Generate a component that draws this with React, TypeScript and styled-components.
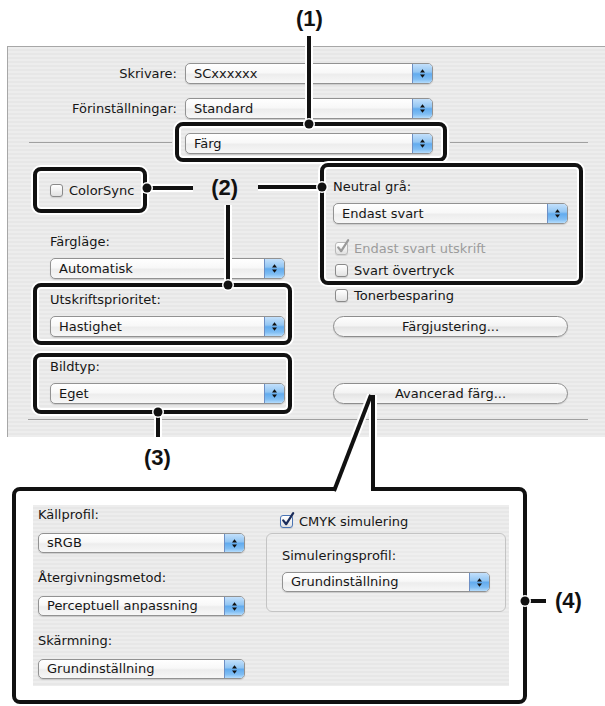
import React from 'react';
import styled, { createGlobalStyle } from 'styled-components';

const GlobalStyle = createGlobalStyle`
  html, body {
    margin: 0;
    padding: 0;
    background: #ffffff;
  }
  body {
    font-family: 'DejaVu Sans', 'Liberation Sans', sans-serif;
    font-size: 13px;
    color: #161616;
  }
`;

const stripes =
  'repeating-linear-gradient(180deg, #ededed 0px, #ededed 2px, #e7e7e7 2px, #e7e7e7 4px)';

const Page = styled.div`
  position: relative;
  width: 605px;
  height: 706px;
  overflow: hidden;
  background: #ffffff;
`;

const Header = styled.div`
  height: 46px;
  padding-top: 6px;
  box-sizing: border-box;
`;

const Marker = styled.div<{ $left: number; $top?: number }>`
  width: max-content;
  flex-shrink: 0;
  margin-left: ${(p) => p.$left}px;
  margin-top: ${(p) => p.$top ?? 0}px;
  font-family: 'Liberation Sans', Arial, sans-serif;
  font-weight: 700;
  font-size: 22px;
  line-height: 26px;
  color: #111;
`;

const Panel = styled.div`
  margin-left: 7px;
  height: 391px;
  box-sizing: border-box;
  padding-top: 16px;
  border-top: 1px solid #a7a7a7;
  border-left: 1px solid #a7a7a7;
  background: ${stripes};
`;

const TopForm = styled.div`
  display: grid;
  grid-template-columns: 169px 248px;
  column-gap: 8px;
  row-gap: 14px;
  align-items: center;
`;

const FormLabel = styled.div`
  text-align: right;
  line-height: 21px;
  white-space: nowrap;
`;

const PaneRow = styled.div`
  display: flex;
  align-items: center;
  gap: 3px;
  margin: 3px 17px 0 21px;
`;

const Rule = styled.div<{ $w?: number }>`
  height: 1px;
  background: #a0a0a0;
  ${(p) => (p.$w ? `width: ${p.$w}px; flex-shrink: 0;` : 'flex: 1;')}
`;

const Callout = styled.div<{ $pad: string; $mt?: number; $bg?: string }>`
  box-sizing: border-box;
  width: max-content;
  flex-shrink: 0;
  margin-top: ${(p) => p.$mt ?? 0}px;
  padding: ${(p) => p.$pad};
  border: 4px solid #111;
  border-radius: 8px;
  background: ${(p) => p.$bg ?? 'transparent'};
  box-shadow: 0 0 0 2px #fff, inset 0 0 0 2px #fff;
`;

const Columns = styled.div`
  display: grid;
  grid-template-columns: 259px 263px;
  column-gap: 28px;
  align-items: start;
  margin: 1px 0 0 25px;
`;

const Column = styled.div<{ $top?: number }>`
  display: flex;
  flex-direction: column;
  align-items: flex-start;
  padding-top: ${(p) => p.$top ?? 0}px;
`;

const ColorSyncRow = styled.div`
  display: flex;
  align-items: flex-start;
`;

const Field = styled.div<{ $gap?: number; $mt?: number; $ml?: number }>`
  display: flex;
  flex-direction: column;
  align-items: flex-start;
  gap: ${(p) => p.$gap ?? 8}px;
  margin-top: ${(p) => p.$mt ?? 0}px;
  margin-left: ${(p) => p.$ml ?? 0}px;
`;

const FieldLabel = styled.div`
  line-height: 16px;
  white-space: nowrap;
`;

const PopupBox = styled.div<{ $w: number; $h: number }>`
  display: flex;
  width: ${(p) => p.$w}px;
  height: ${(p) => p.$h}px;
  box-sizing: border-box;
  border: 1px solid #929292;
  border-radius: 5px;
  overflow: hidden;
  background: linear-gradient(180deg, #ffffff 0%, #f8f8f8 45%, #ededed 55%, #f7f7f7 100%);
  box-shadow: 0 1px 1px rgba(0, 0, 0, 0.14);
`;

const PopupValue = styled.div<{ $h: number }>`
  flex: 1;
  padding-left: 8px;
  line-height: ${(p) => p.$h - 2}px;
  white-space: nowrap;
  overflow: hidden;
`;

const PopupArrows = styled.div`
  width: 19px;
  display: flex;
  align-items: center;
  justify-content: center;
  border-left: 1px solid #6d8fc4;
  background: linear-gradient(
    180deg,
    #c3e0fb 0%,
    #93c6f3 42%,
    #62abee 52%,
    #7fbdf3 80%,
    #b5dcfc 100%
  );
`;

type PopupProps = { value: string; width: number; height?: number };

const Popup = ({ value, width, height = 21 }: PopupProps) => (
  <PopupBox $w={width} $h={height}>
    <PopupValue $h={height}>{value}</PopupValue>
    <PopupArrows>
      <svg width="7" height="11" viewBox="0 0 7 11">
        <path d="M3.5 1.2 L6 4.5 H1 Z M1 6.5 H6 L3.5 9.8 Z" fill="#111" />
      </svg>
    </PopupArrows>
  </PopupBox>
);

const CheckRow = styled.div<{ $muted?: boolean; $mt?: number; $ml?: number }>`
  display: flex;
  align-items: center;
  gap: 6px;
  height: 16px;
  margin-top: ${(p) => p.$mt ?? 0}px;
  margin-left: ${(p) => p.$ml ?? 0}px;
  color: ${(p) => (p.$muted ? '#9c9c9c' : '#161616')};
  white-space: nowrap;
`;

type Tone = 'plain' | 'muted' | 'blue';

const boxBorder: Record<Tone, string> = {
  plain: '#8a8a8a',
  muted: '#b8b8b8',
  blue: '#4a74b4',
};

const Box = styled.span<{ $tone: Tone }>`
  position: relative;
  width: 13px;
  height: 13px;
  box-sizing: border-box;
  border: 1px solid ${(p) => boxBorder[p.$tone]};
  border-radius: 3px;
  background: linear-gradient(180deg, #ffffff 0%, #f1f1f1 50%, #e1e1e1 100%);
  box-shadow: 0 1px 1px rgba(0, 0, 0, 0.1);

  svg {
    position: absolute;
    left: 0;
    top: -4px;
    overflow: visible;
  }
`;

type CheckProps = {
  label: string;
  checked?: boolean;
  tone?: Tone;
  mt?: number;
  ml?: number;
};

const Check = ({ label, checked, tone = 'plain', mt, ml }: CheckProps) => (
  <CheckRow $muted={tone === 'muted'} $mt={mt} $ml={ml}>
    <Box $tone={tone}>
      {checked && (
        <svg width="14" height="15" viewBox="0 0 14 15">
          <path
            d="M2.2 8.4 L5.2 12.2 L12.2 1.2"
            fill="none"
            stroke={tone === 'muted' ? '#9a9a9a' : '#1b2c5a'}
            strokeWidth="2.2"
            strokeLinecap="round"
            strokeLinejoin="round"
          />
        </svg>
      )}
    </Box>
    {label}
  </CheckRow>
);

const PushButton = styled.div<{ $mt: number }>`
  width: 235px;
  height: 21px;
  box-sizing: border-box;
  margin: ${(p) => p.$mt}px 0 0 13px;
  border: 1px solid #8d8d8d;
  border-radius: 11px;
  background: linear-gradient(180deg, #fefefe 0%, #f3f3f3 48%, #e4e4e4 52%, #f6f6f6 100%);
  box-shadow: 0 1px 1px rgba(0, 0, 0, 0.12);
  text-align: center;
  line-height: 19px;
`;

const Divider = styled.div`
  height: 1px;
  margin: 5px 17px 0 20px;
  background: #a0a0a0;
`;

const AdvancedRow = styled.div`
  display: flex;
  align-items: flex-start;
  margin-top: 16px;
  padding-left: 12px;
`;

const AdvancedPane = styled.div`
  width: 476px;
  height: 181px;
  box-sizing: border-box;
  padding: 2px 0 0 5px;
  background: ${stripes};
  display: grid;
  grid-template-columns: 207px 240px;
  column-gap: 21px;
  align-items: start;
`;

const Group = styled.div`
  margin-top: 4px;
  padding: 14px 15px 19px;
  border: 1px solid #c4c4c4;
  border-radius: 6px;
  background: rgba(255, 255, 255, 0.15);
`;

const Annotations = styled.svg`
  position: absolute;
  left: 0;
  top: 0;
  width: 605px;
  height: 706px;
  pointer-events: none;
`;

// leader lines of the callouts: white halo first, black stroke on top
const halos = [
  'M309 36 V124',
  'M147 188 H193',
  'M258 187 H322',
  'M228 205 V285',
  'M158 412 V437',
  'M336 485 L371 395',
  'M373 395 V485',
  'M525 601 H546',
];

const strokes = [
  'M309 36 V124',
  'M147 188 H193',
  'M258 187 H322',
  'M228 205 V285',
  'M158 412 V437',
  'M334 491 L371 395',
  'M373 395 V491',
  'M525 601 H546',
];

const dots = [
  [309, 124],
  [147, 188],
  [322, 187],
  [228, 285],
  [158, 412],
  [525, 601],
];

export default function App() {
  return (
    <Page>
      <GlobalStyle />
      <Header>
        <Marker $left={296}>(1)</Marker>
      </Header>

      <Panel>
        <TopForm>
          <FormLabel>Skrivare:</FormLabel>
          <Popup value="SCxxxxxx" width={248} />
          <FormLabel>Förinställningar:</FormLabel>
          <Popup value="Standard" width={248} />
        </TopForm>

        <PaneRow>
          <Rule $w={143} />
          <Callout $pad="7px 10px 4px 6px">
            <Popup value="Färg" width={248} />
          </Callout>
          <Rule />
        </PaneRow>

        <Columns>
          <Column $top={4}>
            <ColorSyncRow>
              <Callout $pad="11px 9px 11px 13px">
                <Check label="ColorSync" />
              </Callout>
              <Marker $left={64} $top={8}>
                (2)
              </Marker>
            </ColorSyncRow>

            <Field $mt={21} $ml={17}>
              <FieldLabel>Färgläge:</FieldLabel>
              <Popup value="Automatisk" width={235} />
            </Field>

            <Callout $mt={4} $pad="5px 3px 4px 13px">
              <Field>
                <FieldLabel>Utskriftsprioritet:</FieldLabel>
                <Popup value="Hastighet" width={235} />
              </Field>
            </Callout>

            <Callout $mt={8} $pad="2px 3px 6px 13px">
              <Field>
                <FieldLabel>Bildtyp:</FieldLabel>
                <Popup value="Eget" width={235} />
              </Field>
            </Callout>
          </Column>

          <Column>
            <Callout $pad="12px 11px 3px 9px">
              <Field>
                <FieldLabel>Neutral grå:</FieldLabel>
                <Popup value="Endast svart" width={235} />
              </Field>
              <Check label="Endast svart utskrift" checked tone="muted" mt={16} ml={2} />
              <Check label="Svart övertryck" mt={6} ml={2} />
            </Callout>
            <Check label="Tonerbesparing" mt={2} ml={15} />
            <PushButton $mt={13}>Färgjustering...</PushButton>
            <PushButton $mt={46}>Avancerad färg...</PushButton>
          </Column>
        </Columns>

        <Divider />
      </Panel>

      <Marker $left={144} $top={8}>
        (3)
      </Marker>

      <AdvancedRow>
        <Callout $pad="14px 14px 14px 17px" $bg="#ffffff">
          <AdvancedPane>
            <Column>
              <Field $gap={10}>
                <FieldLabel>Källprofil:</FieldLabel>
                <Popup value="sRGB" width={207} height={20} />
              </Field>
              <Field $gap={10} $mt={17}>
                <FieldLabel>Återgivningsmetod:</FieldLabel>
                <Popup value="Perceptuell anpassning" width={207} height={20} />
              </Field>
              <Field $gap={10} $mt={17}>
                <FieldLabel>Skärmning:</FieldLabel>
                <Popup value="Grundinställning" width={207} height={20} />
              </Field>
            </Column>

            <Column>
              <Check label="CMYK simulering" checked tone="blue" mt={6} ml={14} />
              <Group>
                <Field>
                  <FieldLabel>Simuleringsprofil:</FieldLabel>
                  <Popup value="Grundinställning" width={208} height={20} />
                </Field>
              </Group>
            </Column>
          </AdvancedPane>
        </Callout>
        <Marker $left={28} $top={101}>
          (4)
        </Marker>
      </AdvancedRow>

      <Annotations viewBox="0 0 605 706">
        <polygon points="336,486 371,486 371,492 334,492" fill="#ffffff" />
        <g fill="none" stroke="#ffffff" strokeWidth="8">
          {halos.map((d) => (
            <path key={d} d={d} />
          ))}
        </g>
        <g fill="none" stroke="#111111" strokeWidth="4">
          {strokes.map((d) => (
            <path key={d} d={d} />
          ))}
        </g>
        {dots.map(([x, y]) => (
          <g key={`${x}-${y}`}>
            <circle cx={x} cy={y} r="6" fill="#ffffff" />
            <circle cx={x} cy={y} r="4.5" fill="#111111" />
          </g>
        ))}
      </Annotations>
    </Page>
  );
}
